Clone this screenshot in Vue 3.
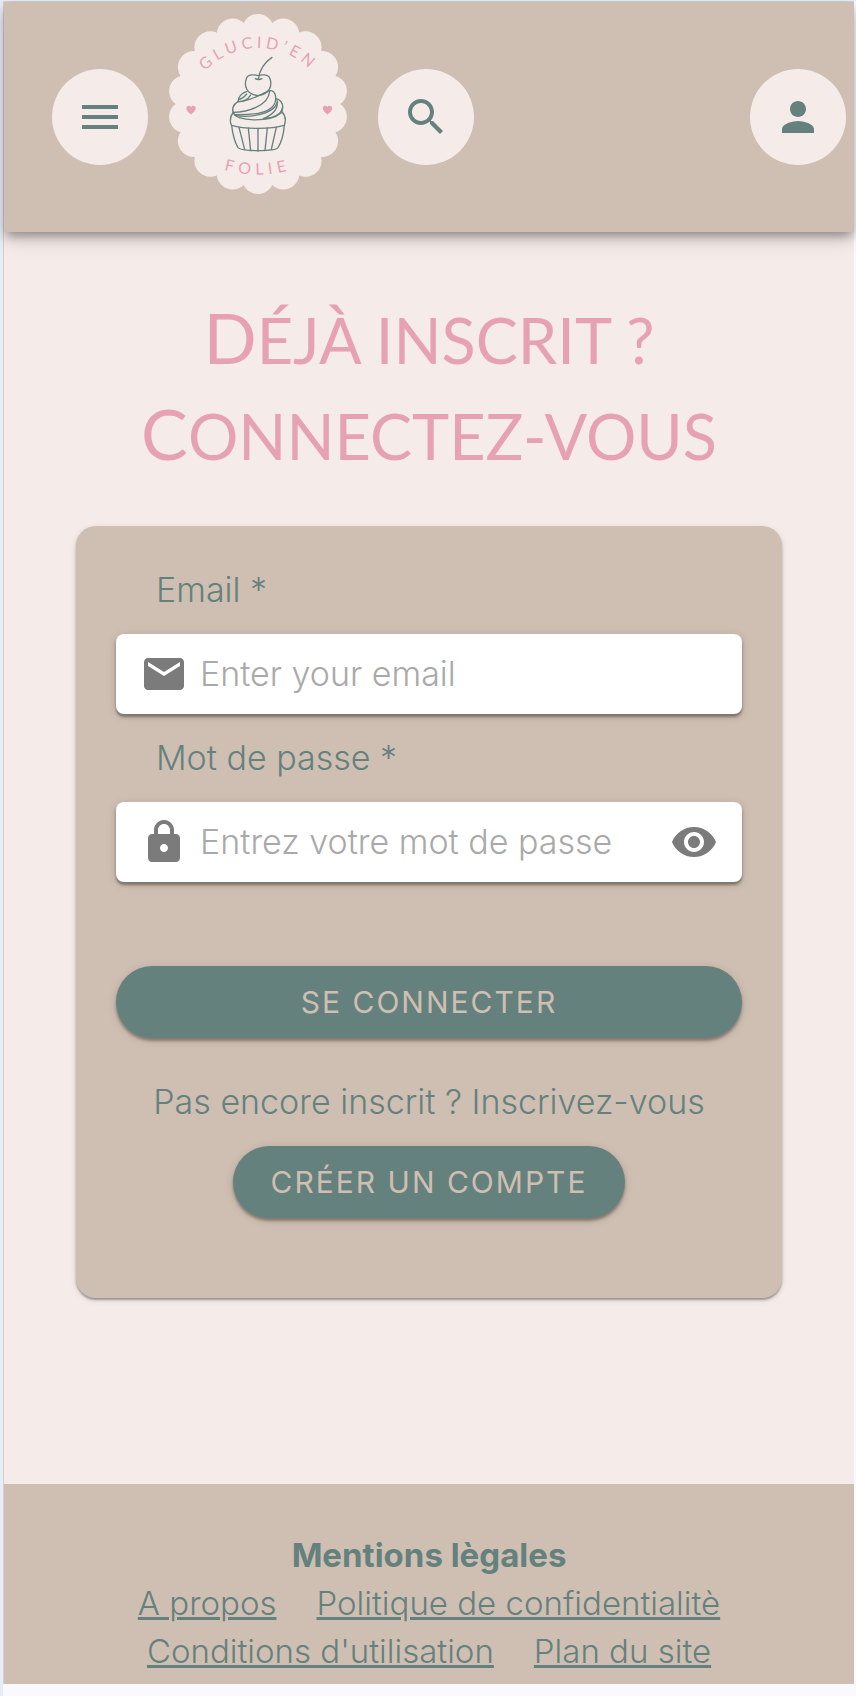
<script setup>
import { ref } from 'vue'

const email = ref('')
const password = ref('')
const passwordVisible = ref(false)

const scallops = Array.from({ length: 18 }, (_, i) => {
  const angle = (i * 20 * Math.PI) / 180
  return { x: 74 * Math.sin(angle), y: -74 * Math.cos(angle) }
})

const legalLinks = [
  'A propos',
  'Politique de confidentialitè',
  "Conditions d'utilisation",
  'Plan du site'
]
</script>

<template>
  <div class="shell">
    <div class="page">
      <header class="topbar">
        <button class="round" type="button" aria-label="Menu">
          <svg viewBox="0 0 24 24"><path d="M3 18h18v-2H3v2zm0-5h18v-2H3v2zm0-7v2h18V6H3z" /></svg>
        </button>
        <a class="logo" href="#" aria-label="Glucid'en Folie">
          <svg viewBox="-90 -90 180 180">
            <defs>
              <path id="arc-top" d="M-70 36A73 73 0 1 1 71 36" />
              <path id="arc-bottom" d="M-40 64Q0 77 40 64" />
            </defs>
            <g class="badge">
              <circle r="80" />
              <circle v-for="(s, i) in scallops" :key="i" :cx="s.x" :cy="s.y" r="16" />
            </g>
            <text class="lettering"><textPath href="#arc-top" startOffset="50%">GLUCID’EN</textPath></text>
            <text class="lettering wide"><textPath href="#arc-bottom" startOffset="50%">FOLIE</textPath></text>
            <path class="heart" d="M-67 10.500C-70 8-71.700 6.500-71.700 4.300C-71.700 1.400-68.300 1-67 3.300C-65.700 1-62.300 1.400-62.300 4.300C-62.300 6.500-64 8-67 10.500Z" />
            <path class="heart" d="M69.500 10.500C66.500 8 64.800 6.500 64.800 4.300C64.800 1.400 68.200 1 69.500 3.300C70.800 1 74.200 1.400 74.200 4.300C74.200 6.500 72.500 8 69.500 10.500Z" />
            <g class="cupcake" transform="translate(-98 -99.300) scale(.3333)">
              <path d="M295 224C298 198 312 174 336 158" />
              <path d="M286 222Q295 227 306 222" />
              <path d="M294 213C284 209 264 208 259 222C252 242 257 268 294 273C330 268 337 242 330 222C325 208 304 209 294 213Z" />
              <path d="M261 260C247 264 234 276 234 291C220 299 213 313 222 328" />
              <path d="M234 291C250 291 264 283 272 271M236 284C248 282 254 276 260 268" />
              <path d="M234 291C270 290 300 270 328 258C347 256 350 278 345 294C334 322 290 332 224 330" />
              <path d="M221 323C258 322 326 306 329 259" />
              <path d="M347 282C360 283 369 295 368 308C368 316 367 319 364 324" />
              <path d="M351 284C356 306 344 328 310 342C334 342 366 330 368 307" />
              <path d="M226 332C260 340 340 332 353 292" />
              <path d="M220 322C214 330 211 340 211 347C211 354 213 360 215 362C255 374 333 374 373 362C378 348 376 332 366 321" />
              <path d="M221 325C224 350 330 354 362 326" />
              <path d="M215 362C218 390 224 411 234 429C244 441 344 441 354 429C365 411 371 388 373 362" />
              <path d="M237 368L254 434M265 370L272 438M294 371V440M322 370L315 438M349 368L334 434" />
            </g>
          </svg>
        </a>
        <button class="round" type="button" aria-label="Rechercher">
          <svg viewBox="0 0 24 24"><path d="M15.500 14h-.79l-.28-.27C15.410 12.590 16 11.110 16 9.500 16 5.910 13.090 3 9.500 3S3 5.910 3 9.500 5.910 16 9.500 16c1.610 0 3.090-.59 4.230-1.570l.27.28v.79l5 4.990L20.490 19l-4.990-5zm-6 0C7.010 14 5 11.990 5 9.500S7.010 5 9.500 5 14 7.010 14 9.500 11.990 14 9.500 14z" /></svg>
        </button>
        <button class="round account" type="button" aria-label="Mon compte">
          <svg viewBox="0 0 24 24"><path d="M12 12c2.210 0 4-1.790 4-4s-1.790-4-4-4-4 1.790-4 4 1.790 4 4 4zm0 2c-2.670 0-8 1.340-8 4v2h16v-2c0-2.660-5.330-4-8-4z" /></svg>
        </button>
      </header>

      <main class="content">
        <h1 class="title"><span>Déjà inscrit ?</span> <span>Connectez-vous</span></h1>

        <form class="card" @submit.prevent>
          <label for="email">Email *</label>
          <div class="field">
            <svg viewBox="0 0 24 24"><path d="M20 4H4c-1.100 0-1.990.9-1.990 2L2 18c0 1.100.9 2 2 2h16c1.100 0 2-.9 2-2V6c0-1.100-.9-2-2-2zm0 4l-8 5-8-5V6l8 5 8-5v2z" /></svg>
            <input id="email" v-model="email" type="email" placeholder="Enter your email" />
          </div>
          <label for="password">Mot de passe *</label>
          <div class="field">
            <svg viewBox="0 0 24 24"><path d="M18 8h-1V6c0-2.760-2.240-5-5-5S7 3.240 7 6v2H6c-1.100 0-2 .9-2 2v10c0 1.100.9 2 2 2h12c1.100 0 2-.9 2-2V10c0-1.100-.9-2-2-2zm-6 9c-1.100 0-2-.9-2-2s.9-2 2-2 2 .9 2 2-.9 2-2 2zm3-9H9V6c0-1.660 1.340-3 3-3s3 1.340 3 3v2z" /></svg>
            <input id="password" v-model="password" :type="passwordVisible ? 'text' : 'password'" placeholder="Entrez votre mot de passe" />
            <button class="reveal" type="button" aria-label="Afficher le mot de passe" @click="passwordVisible = !passwordVisible">
              <svg viewBox="0 0 24 24"><path d="M12 4.500C7 4.500 2.730 7.610 1 12c1.730 4.390 6 7.500 11 7.500s9.270-3.110 11-7.500c-1.730-4.390-6-7.500-11-7.500zM12 17c-2.760 0-5-2.240-5-5s2.240-5 5-5 5 2.240 5 5-2.240 5-5 5zm0-8c-1.660 0-3 1.340-3 3s1.340 3 3 3 3-1.340 3-3-1.340-3-3-3z" /></svg>
            </button>
          </div>
          <button class="pill submit" type="submit">SE CONNECTER</button>
          <p class="hint">Pas encore inscrit ? Inscrivez-vous</p>
          <button class="pill create" type="button">CRÉER UN COMPTE</button>
        </form>
      </main>

      <footer class="footer">
        <h2>Mentions lègales</h2>
        <nav class="links">
          <a v-for="link in legalLinks" :key="link" href="#">{{ link }}</a>
        </nav>
      </footer>
    </div>
  </div>
</template>

<style>
body {
  margin: 0;
  background: #f8faff;
}
</style>

<style scoped>
.shell {
  --cream: #f5ece9;
  --tan: #cfbfb2;
  --teal: #65817e;
  --pink: #e6a2b3;
  box-sizing: border-box;
  min-height: 100vh;
  padding: 1px 2px 12px 0;
  border-left: 3px solid #e8ecf5;
  background: linear-gradient(#e8ecf5 1px, transparent 1px);
  color: var(--teal);
  font-family: Inter, "Open Sans", sans-serif;
  font-size: 34px;
  font-weight: 300;
  line-height: 48px;
}
.page {
  border-top: 1px solid #d0d1d8;
  border-left: 1px solid #d0d1d8;
  background: var(--cream);
}
svg {
  display: block;
  width: 48px;
  height: 48px;
  flex: none;
  fill: currentColor;
}
button {
  padding: 0;
  border: 0;
  font-family: inherit;
  cursor: pointer;
}
.topbar {
  display: flex;
  align-items: center;
  height: 230px;
  padding: 0 8px 0 48px;
  box-sizing: border-box;
  background: var(--tan);
  box-shadow: 0 6px 10px -2px rgba(0, 0, 0, 0.36), 0 8px 20px rgba(0, 0, 0, 0.12);
}
.round {
  display: grid;
  place-items: center;
  flex: none;
  width: 96px;
  height: 96px;
  border-radius: 50%;
  background: var(--cream);
  color: var(--teal);
}
.account {
  margin-left: auto;
}
.logo {
  align-self: flex-start;
  margin: 12px 30px 0 20px;
}
.logo svg {
  width: 180px;
  height: 180px;
}
.badge {
  fill: var(--cream);
}
.lettering {
  fill: var(--pink);
  font-family: Lato, sans-serif;
  font-size: 16px;
  font-weight: 400;
  letter-spacing: 4px;
  text-anchor: middle;
}
.lettering.wide {
  letter-spacing: 5px;
}
.heart {
  fill: var(--pink);
}
.cupcake {
  fill: none;
  stroke: var(--teal);
  stroke-width: 4;
  stroke-linecap: round;
  stroke-linejoin: round;
}
.content {
  padding: 60px 72px 186px;
}
.title {
  margin: 0 0 42px;
  color: var(--pink);
  font-family: Lato, sans-serif;
  font-size: 63px;
  font-weight: 400;
  line-height: 96px;
  text-align: center;
  text-transform: uppercase;
}
.title span {
  display: block;
}
.title span::first-letter {
  font-size: 70px;
  line-height: 48px;
}
.card {
  display: flex;
  flex-direction: column;
  padding: 40px 40px 80px;
  border-radius: 20px;
  background: var(--tan);
  box-shadow: 0 2px 2px rgba(0, 0, 0, 0.3), 0 2px 6px rgba(0, 0, 0, 0.12);
}
.card label {
  padding-left: 40px;
}
.field {
  display: flex;
  align-items: center;
  gap: 12px;
  height: 80px;
  margin: 20px 0;
  padding: 0 24px;
  border-radius: 8px;
  background: #fff;
  color: #7b7b7b;
  box-shadow: 0 3px 3px rgba(0, 0, 0, 0.34), 0 2px 10px rgba(0, 0, 0, 0.14);
}
.field input {
  flex: 1;
  min-width: 0;
  padding: 0;
  border: 0;
  outline: 0;
  background: transparent;
  color: var(--teal);
  font: inherit;
}
.field input::placeholder {
  color: #a9a9a9;
  opacity: 1;
}
.reveal {
  background: none;
  color: inherit;
}
.pill {
  height: 72px;
  border-radius: 36px;
  background: var(--teal);
  color: var(--tan);
  font-size: 30px;
  font-weight: 400;
  letter-spacing: 2px;
  box-shadow: 0 3px 3px rgba(0, 0, 0, 0.3), 0 2px 10px rgba(0, 0, 0, 0.14);
}
.submit {
  margin-top: 64px;
}
.create {
  align-self: center;
  padding: 0 38px;
}
.hint {
  margin: 40px 0 20px;
  text-align: center;
}
.footer {
  padding: 47px 72px 9px;
  background: var(--tan);
  font-size: 33px;
  text-align: center;
}
.footer h2 {
  margin: 0;
  font-size: 33px;
  font-weight: 700;
}
.links {
  display: flex;
  flex-wrap: wrap;
  justify-content: center;
  column-gap: 40px;
}
.links a {
  color: inherit;
  text-decoration-thickness: 3px;
  text-underline-offset: 2px;
}
</style>
